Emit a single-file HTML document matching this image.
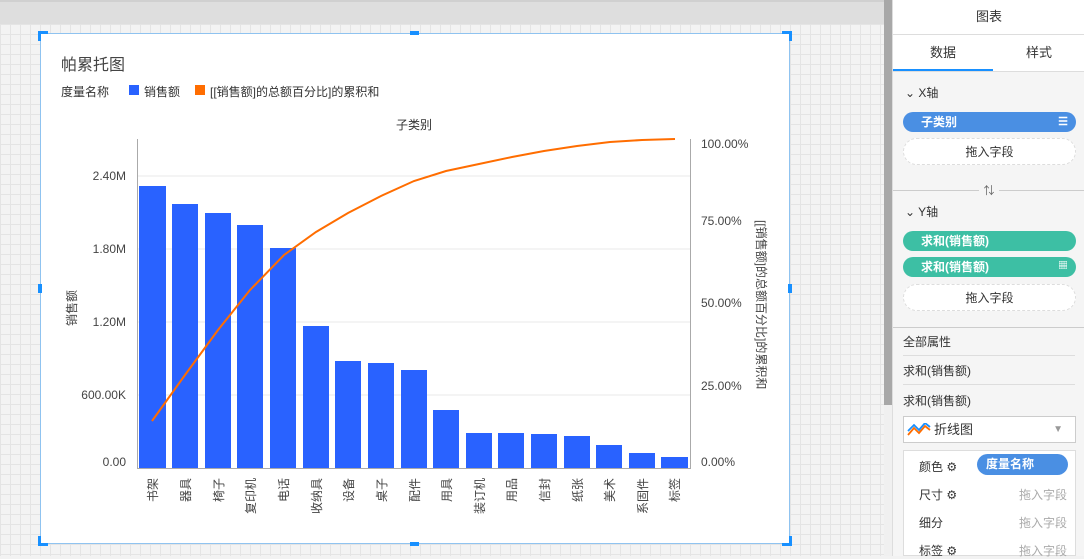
<!DOCTYPE html>
<html><head><meta charset="utf-8"><style>
*{margin:0;padding:0;box-sizing:border-box}
body{width:1084px;height:556px;overflow:hidden;position:relative;font-family:"Liberation Sans","Noto Sans CJK SC",sans-serif;background:#f2f2f2;color:#333}
.grid{position:absolute;left:0;top:24px;width:884px;height:532px;background-color:#f3f3f3;background-image:linear-gradient(#e4e4e4 1px,transparent 1px),linear-gradient(90deg,#e4e4e4 1px,transparent 1px);background-size:10px 10px}
.topbar{position:absolute;left:0;top:0;width:884px;height:24px;background:#dedede;border-top:2px solid #d0d0d0}
.card{position:absolute;left:40px;top:33px;width:750px;height:511px;background:#fff;border:1px solid #8fc3f0}
.h{position:absolute;background:#1890ff}
.t{position:absolute;font-size:12px;color:#333;white-space:nowrap}
.scroll{position:absolute;left:884px;top:0;width:8px;height:556px;background:#f0f0f0}
.scroll div{position:absolute;left:0;top:0;width:8px;height:405px;background:#a8a8a8}
.panel{position:absolute;left:892px;top:0;width:192px;height:556px;background:#f5f5f5;border-left:1px solid #ddd}
.pill{position:absolute;left:10px;width:173px;height:20px;border-radius:10px;color:#fff;font-size:12px;font-weight:bold;line-height:20px;padding-left:18px}
.drop{position:absolute;left:10px;width:173px;height:27px;border-radius:14px;border:1px dashed #ddd;background:#fff;font-size:12px;text-align:center;line-height:26px}
.row{position:absolute;left:10px;width:172px;font-size:12px;height:28px;line-height:28px;border-bottom:1px solid #ddd}
</style></head><body>
<div class="topbar"></div>
<div class="grid"></div>
<div class="card">
<div class="t" style="left:20px;top:17px;font-size:16px;color:#444">帕累托图</div>
<div class="t" style="left:20px;top:49px">度量名称</div>
<div style="position:absolute;left:88px;top:51px;width:10px;height:10px;background:#2962ff"></div>
<div class="t" style="left:103px;top:49px">销售额</div>
<div style="position:absolute;left:154px;top:51px;width:10px;height:10px;background:#ff6d00"></div>
<div class="t" style="left:169px;top:49px">[[销售额]的总额百分比]的累积和</div>
<div class="t" style="left:355px;top:82px">子类别</div>
</div>
<svg style="position:absolute;left:0;top:0" width="884" height="556">
<g stroke="#e8e8e8"><line x1="138" x2="690" y1="176" y2="176"/><line x1="138" x2="690" y1="249" y2="249"/><line x1="138" x2="690" y1="322" y2="322"/><line x1="138" x2="690" y1="395" y2="395"/></g>
<g fill="#2962ff">
<rect x="139" y="186" width="27" height="282"/><rect x="172" y="204" width="26" height="264"/><rect x="205" y="213" width="26" height="255"/><rect x="237" y="225" width="26" height="243"/><rect x="270" y="248" width="26" height="220"/><rect x="303" y="326" width="26" height="142"/><rect x="335" y="361" width="26" height="107"/><rect x="368" y="363" width="26" height="105"/><rect x="401" y="370" width="26" height="98"/><rect x="433" y="410" width="26" height="58"/><rect x="466" y="433" width="26" height="35"/><rect x="498" y="433" width="26" height="35"/><rect x="531" y="434" width="26" height="34"/><rect x="564" y="436" width="26" height="32"/><rect x="596" y="445" width="26" height="23"/><rect x="629" y="453" width="26" height="15"/><rect x="661" y="457" width="27" height="11"/>
</g>
<g stroke="#aaa"><line x1="137.5" x2="137.5" y1="139" y2="468"/><line x1="690.5" x2="690.5" y1="139" y2="468"/><line x1="137" x2="691" y1="468.5" y2="468.5"/></g>
<polyline fill="none" stroke="#ff6d00" stroke-width="2" points="152,421 185,375 218,330 250,290 284,255 316,232 348,213 381,196 414,181 446,171 479,164 512,157 544,151 577,146 610,142 642,140 675,139"/>
<g font-size="12" fill="#444" text-anchor="end"><text x="126" y="180">2.40M</text><text x="126" y="253">1.80M</text><text x="126" y="326">1.20M</text><text x="126" y="399">600.00K</text><text x="126" y="466">0.00</text></g>
<g font-size="12" fill="#444"><text x="701" y="148">100.00%</text><text x="701" y="225">75.00%</text><text x="701" y="307">50.00%</text><text x="701" y="390">25.00%</text><text x="701" y="466">0.00%</text></g>
<text font-size="12" fill="#444" transform="translate(76,326) rotate(-90)">销售额</text>
<text font-size="12" fill="#444" transform="translate(757,220) rotate(90)">[[销售额]的总额百分比]的累积和</text>
<g font-size="12" fill="#444" text-anchor="end">
<text transform="translate(157,478) rotate(-90)">书架</text><text transform="translate(190,478) rotate(-90)">器具</text><text transform="translate(223,478) rotate(-90)">椅子</text><text transform="translate(255,478) rotate(-90)">复印机</text><text transform="translate(288,478) rotate(-90)">电话</text><text transform="translate(321,478) rotate(-90)">收纳具</text><text transform="translate(353,478) rotate(-90)">设备</text><text transform="translate(386,478) rotate(-90)">桌子</text><text transform="translate(419,478) rotate(-90)">配件</text><text transform="translate(451,478) rotate(-90)">用具</text><text transform="translate(484,478) rotate(-90)">装订机</text><text transform="translate(516,478) rotate(-90)">用品</text><text transform="translate(549,478) rotate(-90)">信封</text><text transform="translate(582,478) rotate(-90)">纸张</text><text transform="translate(614,478) rotate(-90)">美术</text><text transform="translate(647,478) rotate(-90)">系固件</text><text transform="translate(679,478) rotate(-90)">标签</text>
</g>
<g fill="#1890ff">
<rect x="38" y="31" width="10" height="3"/><rect x="38" y="31" width="3" height="10"/>
<rect x="782" y="31" width="10" height="3"/><rect x="789" y="31" width="3" height="10"/>
<rect x="38" y="543" width="10" height="3"/><rect x="38" y="536" width="3" height="10"/>
<rect x="782" y="543" width="10" height="3"/><rect x="789" y="536" width="3" height="10"/>
<rect x="410" y="31" width="9" height="4"/><rect x="410" y="542" width="9" height="4"/>
<rect x="38" y="284" width="4" height="9"/><rect x="788" y="284" width="4" height="9"/>
</g>
</svg>
<div class="scroll"><div></div></div>
<div class="panel">
<div style="position:absolute;left:0;top:0;width:192px;height:35px;background:#fff;border-bottom:1px solid #ddd;text-align:center;line-height:34px;font-size:13px">图表</div>
<div style="position:absolute;left:0;top:35px;width:192px;height:37px;background:#fff;border-bottom:1px solid #ddd;font-size:13px">
<div style="position:absolute;left:0;top:0;width:100px;height:36px;text-align:center;line-height:36px;border-bottom:2px solid #1890ff">数据</div>
<div style="position:absolute;left:100px;top:0;width:92px;text-align:center;line-height:36px">样式</div></div>
<div class="t" style="left:12px;top:84px">⌄ X轴</div>
<div class="pill" style="top:112px;background:#4a8fe3">子类别<span style="position:absolute;right:8px;top:0;font-size:11px">☰</span></div>
<div class="drop" style="top:138px">拖入字段</div>
<div style="position:absolute;left:0;top:190px;width:192px;border-top:1px solid #ccc"></div>
<div style="position:absolute;left:86px;top:182px;width:20px;background:#f5f5f5;text-align:center;font-size:11px;color:#666">⇅</div>
<div class="t" style="left:12px;top:203px">⌄ Y轴</div>
<div class="pill" style="top:231px;background:#3dbfa4">求和(销售额)</div>
<div class="pill" style="top:257px;background:#3dbfa4">求和(销售额)<span style="position:absolute;right:8px;font-size:10px">▦</span></div>
<div class="drop" style="top:284px">拖入字段</div>
<div style="position:absolute;left:0;top:327px;width:192px;border-top:1px solid #ccc"></div>
<div class="row" style="top:328px">全部属性</div>
<div class="row" style="top:357px">求和(销售额)</div>
<div class="t" style="left:10px;top:392px">求和(销售额)</div>
<div style="position:absolute;left:10px;top:416px;width:173px;height:27px;background:#fff;border:1px solid #ccc;font-size:13px;line-height:25px;padding-left:30px">折线图
<svg style="position:absolute;left:3px;top:6px" width="24" height="14"><polyline points="1,12 7,5 12,10 18,3 23,7" fill="none" stroke="#ff6d00" stroke-width="1.8"/><polyline points="1,8 7,2 12,7 18,0 23,4" fill="none" stroke="#1890ff" stroke-width="1.8"/></svg>
<span style="position:absolute;right:12px;top:0;color:#999;font-size:10px">▼</span></div>
<div style="position:absolute;left:10px;top:450px;width:173px;height:106px;background:#fff;border:1px solid #ddd;font-size:12px">
<div class="t" style="left:15px;top:7px">颜色 ⚙</div>
<div style="position:absolute;left:73px;top:3px;width:91px;height:21px;border-radius:11px;background:#4a8fe3;color:#fff;font-weight:bold;line-height:21px;padding-left:9px">度量名称</div>
<div class="t" style="left:15px;top:35px">尺寸 ⚙</div><div class="t" style="left:115px;top:35px;color:#aaa">拖入字段</div>
<div class="t" style="left:15px;top:63px">细分</div><div class="t" style="left:115px;top:63px;color:#aaa">拖入字段</div>
<div class="t" style="left:15px;top:91px">标签 ⚙</div><div class="t" style="left:115px;top:91px;color:#aaa">拖入字段</div>
</div>
</div>
</body></html>
